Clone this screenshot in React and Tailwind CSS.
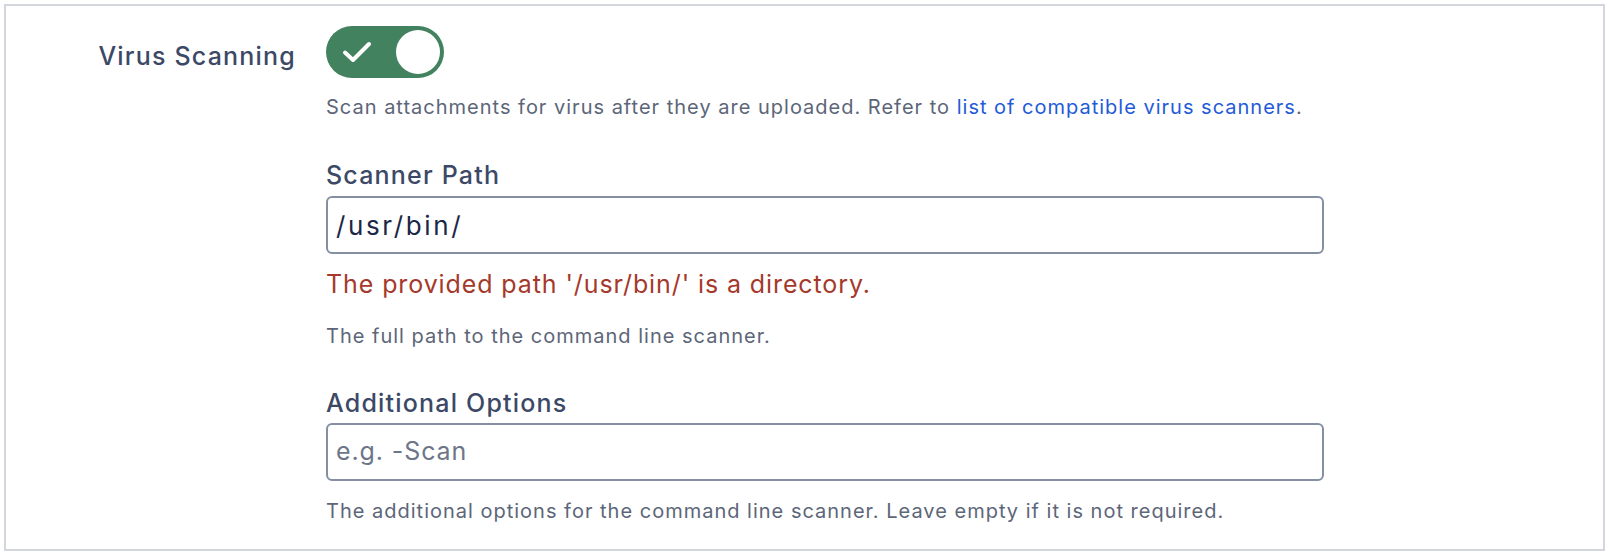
export default function App() {
  return (
    <div className="w-[1610px] h-[556px] bg-white p-[4px]" style={{ fontFamily: "Inter, 'Noto Sans', sans-serif" }}>
      <div className="border-2 border-[#d3d6dd] h-[547px] w-[1601px] grid grid-cols-[320px_1fr]">
        <div className="pt-[34px] pr-[30px] text-right text-[25px] leading-[32px] font-medium tracking-[1.2px] text-[#3c4966]">
          Virus Scanning
        </div>
        <div className="pt-[20px]">
          <button className="w-[118px] h-[52px] rounded-full bg-[#42825e] flex items-center justify-between pl-[16px] pr-[4px]">
            <svg width="30" height="24" viewBox="0 0 30 24" fill="none">
              <path d="M3 12.5 L11 20 L27 4" stroke="white" strokeWidth="4" strokeLinecap="round" strokeLinejoin="round" />
            </svg>
            <span className="w-[44px] h-[44px] rounded-full bg-white block" />
          </button>
          <p className="mt-[15px] text-[20px] leading-[28px] tracking-[1px] text-[#5c6679]">
            Scan attachments for virus after they are uploaded. Refer to{" "}
            <a className="text-[#1f5bd8]">list of compatible virus scanners</a>.
          </p>
          <div className="mt-[38px] text-[25px] leading-[32px] font-medium tracking-[1.2px] text-[#3c4966]">Scanner Path</div>
          <div className="mt-[5px] w-[998px] h-[58px] border-2 border-[#858fa2] rounded-[6px] flex items-center px-[8px] text-[26px] tracking-[2.6px] text-[#1b2747]">
            /usr/bin/
          </div>
          <div className="mt-[14px] text-[25px] leading-[32px] tracking-[0.9px] text-[#a5392b]">
            The provided path '/usr/bin/' is a directory.
          </div>
          <p className="mt-[22px] text-[20px] leading-[28px] tracking-[1px] text-[#5c6679]">The full path to the command line scanner.</p>
          <div className="mt-[37px] text-[25px] leading-[32px] font-medium tracking-[1.2px] text-[#3c4966]">Additional Options</div>
          <div className="mt-[4px] w-[998px] h-[58px] border-2 border-[#858fa2] rounded-[6px] flex items-center px-[8px] text-[25px] tracking-[0.9px] text-[#6d7689]">
            e.g. -Scan
          </div>
          <p className="mt-[16px] text-[20px] leading-[28px] tracking-[1px] text-[#5c6679]">
            The additional options for the command line scanner. Leave empty if it is not required.
          </p>
        </div>
      </div>
    </div>
  );
}
